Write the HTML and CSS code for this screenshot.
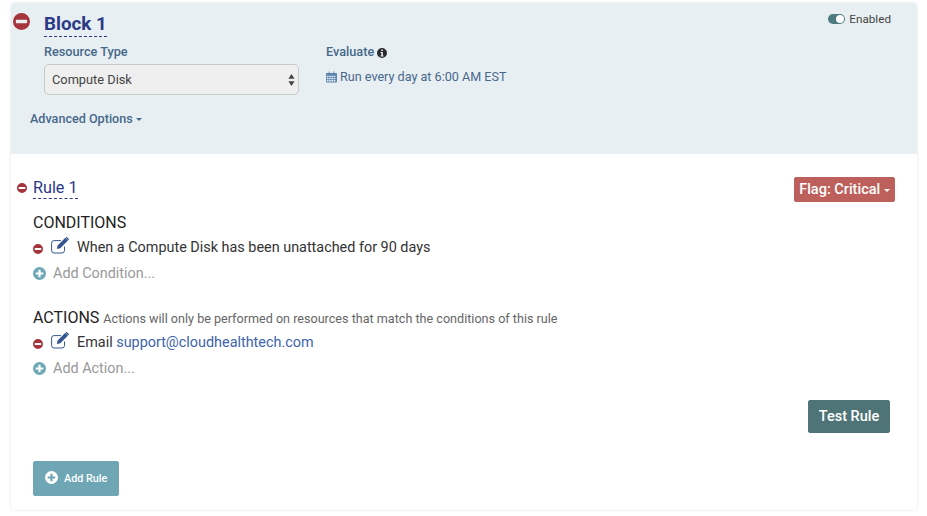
FILE: index.html
```html
<!DOCTYPE html>
<html lang="en">
<head>
<meta charset="utf-8">
<title>Block 1</title>
<link rel="stylesheet" href="styles.css">
</head>
<body>
<div class="card">
  <section class="block">
    <div class="block-title-row">
      <svg class="ic ic-block-minus" viewBox="0 0 24 24"><path fill="#a5343c" fill-rule="evenodd" d="M12 0a12 12 0 1 0 0 24a12 12 0 0 0 0-24zM5 9.500h14a1 1 0 0 1 1 1v3a1 1 0 0 1-1 1H5a1 1 0 0 1-1-1v-3a1 1 0 0 1 1-1z"/></svg>
      <h1 class="block-title">Block 1</h1>
      <div class="toggle-wrap"><span class="toggle"><span class="knob"></span></span><span class="toggle-label">Enabled</span></div>
    </div>
    <div class="fields">
      <div class="field-type">
        <div class="label">Resource Type</div>
        <div class="select">
          <span>Compute Disk</span>
          <svg class="updown" viewBox="0 0 8 14"><path fill="#444" d="M4 0l3.600 5.600H.4zM4 14L.4 8.400h7.200z"/></svg>
        </div>
      </div>
      <div class="field-eval">
        <div class="label">Evaluate
          <svg class="ic ic-info" viewBox="0 0 24 24"><path fill="#2b2b2b" fill-rule="evenodd" d="M12 0a12 12 0 1 0 0 24a12 12 0 0 0 0-24zM10 3.600h4v3.600h-4zM8.400 9.600H14v8.400h1.800v2.600H8.400V18h1.800v-5.800H8.400z"/></svg>
        </div>
        <div class="schedule">
          <svg class="ic ic-cal" viewBox="0 0 24 24"><path fill="#5d84ac" fill-rule="evenodd" d="M6 0h2v3h8V0h2v3h4a2 2 0 0 1 2 2v17a2 2 0 0 1-2 2H2a2 2 0 0 1-2-2V5a2 2 0 0 1 2-2h4zM1.800 9v3h3.600V9zm5 0v3h3.600V9zm5 0v3h3.600V9zm5 0v3h3.500V9zM1.800 13.500v3h3.600v-3zm5 0v3h3.600v-3zm5 0v3h3.600v-3zm5 0v3h3.500v-3zM1.800 18v4h3.600v-4zm5 0v4h3.600v-4zm5 0v4h3.600v-4zm5 0v4h3.500v-4z"/></svg>
          <span>Run every day at 6:00 AM EST</span>
        </div>
      </div>
    </div>
    <div class="advanced">Advanced Options <span class="caret caret-blue"></span></div>
  </section>
  <section class="rule">
    <div class="rule-head">
      <svg class="ic ic-rule-minus" viewBox="0 0 24 24"><path fill="#a5343c" fill-rule="evenodd" d="M12 0a12 12 0 1 0 0 24a12 12 0 0 0 0-24zM5 9.500h14a1 1 0 0 1 1 1v3a1 1 0 0 1-1 1H5a1 1 0 0 1-1-1v-3a1 1 0 0 1 1-1z"/></svg>
      <h2 class="rule-title">Rule 1</h2>
      <button class="flag">Flag: Critical <span class="caret caret-white"></span></button>
    </div>
    <div class="rule-body">
      <h3 class="section-title">CONDITIONS</h3>
      <div class="item">
        <svg class="ic ic-minus" viewBox="0 0 24 24"><path fill="#a5343c" fill-rule="evenodd" d="M12 0a12 12 0 1 0 0 24a12 12 0 0 0 0-24zM5 9.500h14a1 1 0 0 1 1 1v3a1 1 0 0 1-1 1H5a1 1 0 0 1-1-1v-3a1 1 0 0 1 1-1z"/></svg>
        <svg class="ic ic-edit" viewBox="0 0 18 17"><path fill="none" stroke="#34558f" stroke-width="1" d="M13.500 9.500v4a2.500 2.500 0 0 1-2.500 2.500H3.100A2.500 2.500 0 0 1 .6 13.500V6.100a2.500 2.500 0 0 1 2.500-2.500H10"/><path fill="#34558f" d="M14.300.8l2.700 2.700-7.700 7.700-3.500.8.800-3.500zM15 .2a.8.8 0 0 1 1.100 0l1.600 1.600a.8.800 0 0 1 0 1.100l-.4.400-2.700-2.700z"/></svg>
        <span class="item-text">When a Compute Disk has been unattached for 90 days</span>
      </div>
      <div class="add">
        <svg class="ic ic-plus" viewBox="0 0 24 24"><path fill="#6ea8b6" fill-rule="evenodd" d="M12 0a12 12 0 1 0 0 24a12 12 0 0 0 0-24zM10 5h4v5h5v4h-5v5h-4v-5H5v-4h5z"/></svg>
        <span>Add Condition...</span>
      </div>
      <div class="actions-head"><h3 class="section-title">ACTIONS</h3> <small>Actions will only be performed on resources that match the conditions of this rule</small></div>
      <div class="item">
        <svg class="ic ic-minus" viewBox="0 0 24 24"><path fill="#a5343c" fill-rule="evenodd" d="M12 0a12 12 0 1 0 0 24a12 12 0 0 0 0-24zM5 9.500h14a1 1 0 0 1 1 1v3a1 1 0 0 1-1 1H5a1 1 0 0 1-1-1v-3a1 1 0 0 1 1-1z"/></svg>
        <svg class="ic ic-edit" viewBox="0 0 18 17"><path fill="none" stroke="#34558f" stroke-width="1" d="M13.500 9.500v4a2.500 2.500 0 0 1-2.500 2.500H3.100A2.500 2.500 0 0 1 .6 13.500V6.100a2.500 2.500 0 0 1 2.500-2.500H10"/><path fill="#34558f" d="M14.300.8l2.700 2.700-7.700 7.700-3.500.8.800-3.500zM15 .2a.8.8 0 0 1 1.100 0l1.600 1.600a.8.800 0 0 1 0 1.100l-.4.400-2.700-2.700z"/></svg>
        <span class="item-text">Email <a class="mail" href="#">support@cloudhealthtech.com</a></span>
      </div>
      <div class="add">
        <svg class="ic ic-plus" viewBox="0 0 24 24"><path fill="#6ea8b6" fill-rule="evenodd" d="M12 0a12 12 0 1 0 0 24a12 12 0 0 0 0-24zM10 5h4v5h5v4h-5v5h-4v-5H5v-4h5z"/></svg>
        <span>Add Action...</span>
      </div>
      <div class="test-row"><button class="test">Test Rule</button></div>
      <button class="add-rule">
        <svg class="ic ic-addrule" viewBox="0 0 24 24"><path fill="#fff" fill-rule="evenodd" d="M12 0a12 12 0 1 0 0 24a12 12 0 0 0 0-24zM10 5h4v5h5v4h-5v5h-4v-5H5v-4h5z"/></svg>
        <span>Add Rule</span>
      </button>
    </div>
  </section>
</div>
</body>
</html>
```
FILE: styles.css
```css
* { box-sizing: border-box; }
html, body { margin: 0; padding: 0; background: #fff; }
body {
  width: 927px;
  height: 516px;
  overflow: hidden;
  padding: 3px 10px 0 11px;
  font-family: Roboto, "Liberation Sans", sans-serif;
  color: #333;
}
.card {
  height: 507px;
  border-radius: 4px;
  background: #fff;
  box-shadow: 0 0 3px rgba(0, 0, 0, .12);
}
.ic { display: block; flex: none; }
.block {
  height: 151px;
  background: #e8eff3;
  border-radius: 4px 4px 0 0;
  padding: 10px 0 0 2px;
}
.block-title-row { display: flex; align-items: flex-start; height: 26px; }
.ic-block-minus { width: 17px; height: 17px; margin-right: 14px; }
.block-title {
  margin: 0;
  font-size: 18.800px;
  line-height: 23px;
  font-weight: 700;
  color: #2b3a86;
  border-bottom: 1px dashed #2b3a86;
}
.toggle-wrap { margin-left: auto; margin-top: -1px; display: flex; align-items: center; gap: 4px; margin-right: 26px; }
.toggle { width: 17px; height: 10px; border-radius: 5px; background: #4d7b7f; position: relative; display: block; }
.knob { position: absolute; right: 1px; top: 1px; width: 8px; height: 8px; border-radius: 50%; background: #fff; }
.toggle-label { font-size: 11.700px; line-height: 14px; color: #444; }
.fields { display: flex; padding-left: 31px; margin-top: 5px; }
.field-type { width: 282px; }
.label { font-size: 12.700px; font-weight: 500; line-height: 16px; color: #46698a; display: flex; align-items: center; gap: 3px; }
.select {
  margin-top: 4px;
  width: 255px;
  height: 31px;
  border: 1px solid #c6c9ca;
  border-radius: 5px;
  background: #efefef;
  display: flex;
  align-items: center;
  justify-content: space-between;
  padding: 0 3px 0 7px;
  font-size: 12.800px;
  color: #444;
}
.updown { width: 7px; height: 12px; }
.ic-info { width: 10px; height: 10px; margin-top: 1px; }
.schedule { margin-top: 8px; display: flex; align-items: center; gap: 3px; font-size: 12.600px; line-height: 18px; color: #46698a; }
.ic-cal { width: 11px; height: 12px; }
.advanced { margin: 16px 0 0 17px; font-size: 12.600px; font-weight: 500; line-height: 16px; color: #46698a; }
.caret { display: inline-block; width: 0; height: 0; border-left: 3.500px solid transparent; border-right: 3.500px solid transparent; border-top: 3.500px solid; vertical-align: middle; }
.caret-blue { color: #46698a; }
.caret-white { color: #fff; }
.rule { padding: 23px 22px 0 6px; }
.rule-head { display: flex; align-items: flex-start; height: 28px; }
.ic-rule-minus { width: 10px; height: 10px; margin: 6px 6px 0 0; }
.rule-title { margin: 0; font-size: 16.200px; font-weight: 400; line-height: 21px; color: #2b3a86; border-bottom: 1px dashed #2b3a86; }
.flag {
  margin-left: auto;
  height: 25px;
  width: 101px;
  padding: 0;
  border: 1px solid #bd5f5a;
  border-radius: 2px;
  background: #bd5f5a;
  color: #fff;
  font: 500 14.500px Roboto, sans-serif;
}
.rule-body { padding-left: 16px; }
.section-title { display: inline; margin: 0; font-size: 16px; font-weight: 400; color: #222; line-height: 20px; }
.rule-body > .section-title { display: block; margin-top: 8px; }
.item { display: flex; align-items: center; height: 24px; margin-top: 2px; }
.ic-minus { width: 10px; height: 10px; margin: 3px 8px 0 0; }
.ic-edit { width: 18px; height: 17px; margin-top: -4px; margin-right: 8px; }
.item-text { font-size: 14.400px; color: #333; }
.mail { color: #3d64ab; text-decoration: none; }
.add { display: flex; align-items: center; gap: 7px; height: 20px; margin-top: 4px; font-size: 14.400px; color: #999; }
.ic-plus { width: 13px; height: 13px; }
.actions-head { margin-top: 25px; line-height: 20px; height: 20px; }
.actions-head small { font-size: 12.600px; color: #666; }
.test-row { display: flex; justify-content: flex-end; margin-top: 22px; padding-right: 5px; }
.test {
  width: 82px;
  height: 33px;
  border: 1px solid #4e7477;
  border-radius: 2px;
  background: #4e7477;
  color: #fff;
  font: 500 14.500px Roboto, sans-serif;
  padding: 0;
}
.add-rule {
  margin-top: 28px;
  width: 86px;
  height: 35px;
  border: 1px solid #6ea6b5;
  border-radius: 2px;
  background: #6ea6b5;
  color: #fff;
  font: 500 10.800px Roboto, sans-serif;
  display: flex;
  align-items: center;
  gap: 6px;
  padding: 0 0 0 11px;
}
.ic-addrule { width: 13px; height: 13px; margin-top: -3px; }
```
